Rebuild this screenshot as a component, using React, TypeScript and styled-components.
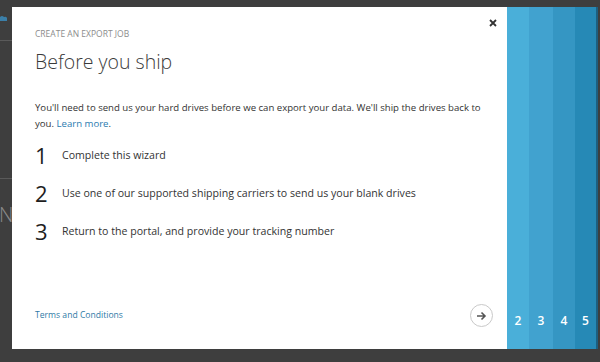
import React from "react";
import styled, { createGlobalStyle } from "styled-components";

const Global = createGlobalStyle`
  html, body { margin: 0; padding: 0; }
  body { background: #3e3e3e; font-family: "Open Sans", "Liberation Sans", sans-serif; }
`;

const Page = styled.div`
  width: 600px;
  height: 362px;
  background: #3e3e3e;
  display: flex;
  flex-direction: row;
  overflow: hidden;
`;

const Gutter = styled.div`
  width: 12px;
  flex: none;
  display: flex;
  flex-direction: column;
  overflow: hidden;
`;

const GutterIcon = styled.div`
  margin-top: 14px;
  height: 8px;
  display: flex;
`;

const GutterRule = styled.div<{ $top: number }>`
  margin-top: ${(p) => p.$top}px;
  height: 1px;
  background: #5a5a5a;
`;

const GutterText = styled.div`
  margin-top: 24px;
  margin-left: -1px;
  font-family: "Open Sans", sans-serif;
  font-weight: 300;
  font-size: 20px;
  line-height: 24px;
  color: #8a8a8a;
  white-space: nowrap;
`;

const Column = styled.div`
  display: flex;
  flex-direction: column;
  padding-top: 7px;
`;

const Dialog = styled.div`
  width: 586px;
  height: 342px;
  display: flex;
  flex-direction: row;
`;

const Main = styled.div`
  width: 472px;
  background: #fff;
  padding: 0 0 0 23px;
  display: flex;
  flex-direction: column;
  position: relative;
`;

const Close = styled.div`
  position: absolute;
  top: 10px;
  right: 8px;
  width: 12px;
  height: 12px;
  display: flex;
  align-items: center;
  justify-content: center;
`;

const Label = styled.div`
  margin-top: 21px;
  font-size: 8.5px;
  line-height: 12px;
  color: #8c8c8c;
`;

const Title = styled.h1`
  margin: 7px 0 0 0;
  font-family: "Open Sans", sans-serif;
  font-weight: 300;
  font-size: 19.5px;
  line-height: 30px;
  color: #3a3a3a;
`;

const Para = styled.p`
  margin: 23px 0 0 0;
  width: 455px;
  font-size: 9.6px;
  line-height: 16px;
  color: #333;
`;

const Link = styled.a`
  color: #2b7cb0;
  text-decoration: none;
`;

const Steps = styled.div`
  margin-top: 8px;
  display: flex;
  flex-direction: column;
  gap: 8px;
`;

const Step = styled.div`
  display: flex;
  align-items: center;
  height: 30px;
`;

const StepNum = styled.span`
  width: 27px;
  font-size: 22px;
  line-height: 30px;
  color: #1e1e1e;
  font-weight: 500;
`;

const StepText = styled.span`
  font-size: 10.6px;
  color: #333;
`;

const Footer = styled.div`
  margin-top: auto;
  margin-bottom: 22px;
  margin-right: 14px;
  display: flex;
  align-items: center;
  justify-content: space-between;
`;

const Terms = styled.a`
  font-size: 8.6px;
  color: #2f7aa6;
  text-decoration: none;
  margin-top: -2px;
`;

const NextButton = styled.div`
  width: 23px;
  height: 23px;
  border: 1.5px solid #c9c9c9;
  border-radius: 50%;
  display: flex;
  align-items: center;
  justify-content: center;
  box-sizing: border-box;
`;

const Rail = styled.div`
  flex: 1;
  display: flex;
  flex-direction: row;
`;

const RailStep = styled.div<{ $bg: string; $w: number }>`
  width: ${(p) => p.$w}px;
  background: ${(p) => p.$bg};
  display: flex;
  align-items: flex-end;
  justify-content: center;
  padding-bottom: 20px;
  box-sizing: border-box;
  color: #fff;
  font-size: 12px;
  font-weight: 600;
`;

const RailEdge = styled.div`
  width: 2px;
  background: #1d5f80;
`;

const steps = [
  "Complete this wizard",
  "Use one of our supported shipping carriers to send us your blank drives",
  "Return to the portal, and provide your tracking number",
];

const rail = [
  { n: 2, bg: "#4aafd9", w: 22 },
  { n: 3, bg: "#41a2cf", w: 24 },
  { n: 4, bg: "#3596c3", w: 22 },
  { n: 5, bg: "#2689b6", w: 21 },
];

export default function App() {
  return (
    <>
      <Global />
      <Page>
        <Gutter>
          <GutterIcon>
            <svg width="8" height="8" viewBox="0 0 8 8">
              <path d="M0 7 L0 3 Q2 1 4 3 Q6 2 7 4 L7 7 Z" fill="#3b7fa8" />
            </svg>
          </GutterIcon>
          <GutterRule $top={18} />
          <GutterRule $top={137} />
          <GutterText>No</GutterText>
        </Gutter>
        <Column>
          <Dialog>
            <Main>
              <Close>
                <svg width="8" height="8" viewBox="0 0 8 8">
                  <path d="M1 1 L7 7 M7 1 L1 7" stroke="#333" strokeWidth="1.8" />
                </svg>
              </Close>
              <Label>CREATE AN EXPORT JOB</Label>
              <Title>Before you ship</Title>
              <Para>
                You'll need to send us your hard drives before we can export your data. We'll ship the drives back to
                you. <Link>Learn more</Link>.
              </Para>
              <Steps>
                {steps.map((s, i) => (
                  <Step key={i}>
                    <StepNum>{i + 1}</StepNum>
                    <StepText>{s}</StepText>
                  </Step>
                ))}
              </Steps>
              <Footer>
                <Terms>Terms and Conditions</Terms>
                <NextButton>
                  <svg width="11" height="10" viewBox="0 0 11 10">
                    <path d="M1 5 H9 M5.5 1.5 L9 5 L5.5 8.5" stroke="#555" strokeWidth="1.6" fill="none" />
                  </svg>
                </NextButton>
              </Footer>
            </Main>
            <Rail>
              {rail.map((r) => (
                <RailStep key={r.n} $bg={r.bg} $w={r.w}>
                  {r.n}
                </RailStep>
              ))}
              <RailEdge />
            </Rail>
          </Dialog>
        </Column>
      </Page>
    </>
  );
}
